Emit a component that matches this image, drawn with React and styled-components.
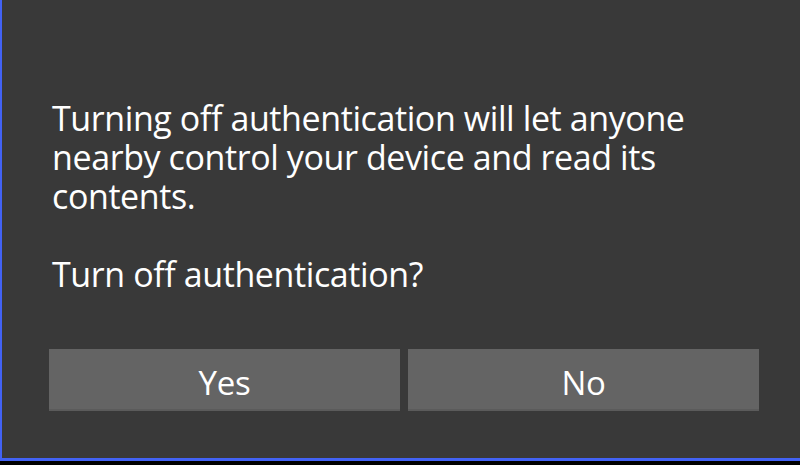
import React from "react";
import styled, { createGlobalStyle } from "styled-components";

const Global = createGlobalStyle`
  html, body { margin: 0; padding: 0; background: #000; }
  #root { width: 800px; height: 465px; }
`;

const Dialog = styled.div`
  box-sizing: border-box;
  width: 800px;
  height: 461px;
  background: #393939;
  border-left: 2px solid #4262f4;
  border-bottom: 3px solid #4262f4;
  display: flex;
  flex-direction: column;
  padding: 99px 41px 0 47px;
  font-family: "Open Sans", "Noto Sans", sans-serif;
  color: #fff;
`;

const Message = styled.p`
  margin: 0 0 0 3px;
  font-size: 34px;
  line-height: 39px;
  letter-spacing: -0.4px;
  width: 680px;
`;

const Question = styled(Message)`
  margin-top: 39px;
`;

const Buttons = styled.div`
  display: grid;
  grid-template-columns: 1fr 1fr;
  gap: 8px;
  margin-top: 55px;
`;

const Button = styled.button`
  height: 62px;
  border: none;
  background: #646464;
  color: #fff;
  font-family: inherit;
  font-size: 33px;
  letter-spacing: -0.3px;
  padding: 5px 0 0;
  box-shadow: inset 0 -2px 0 #5b5b5b;
`;

export default function App() {
  return (
    <>
      <Global />
      <Dialog>
        <Message>
          Turning off authentication will let anyone nearby control your device and read its contents.
        </Message>
        <Question>Turn off authentication?</Question>
        <Buttons>
          <Button>Yes</Button>
          <Button>No</Button>
        </Buttons>
      </Dialog>
    </>
  );
}
